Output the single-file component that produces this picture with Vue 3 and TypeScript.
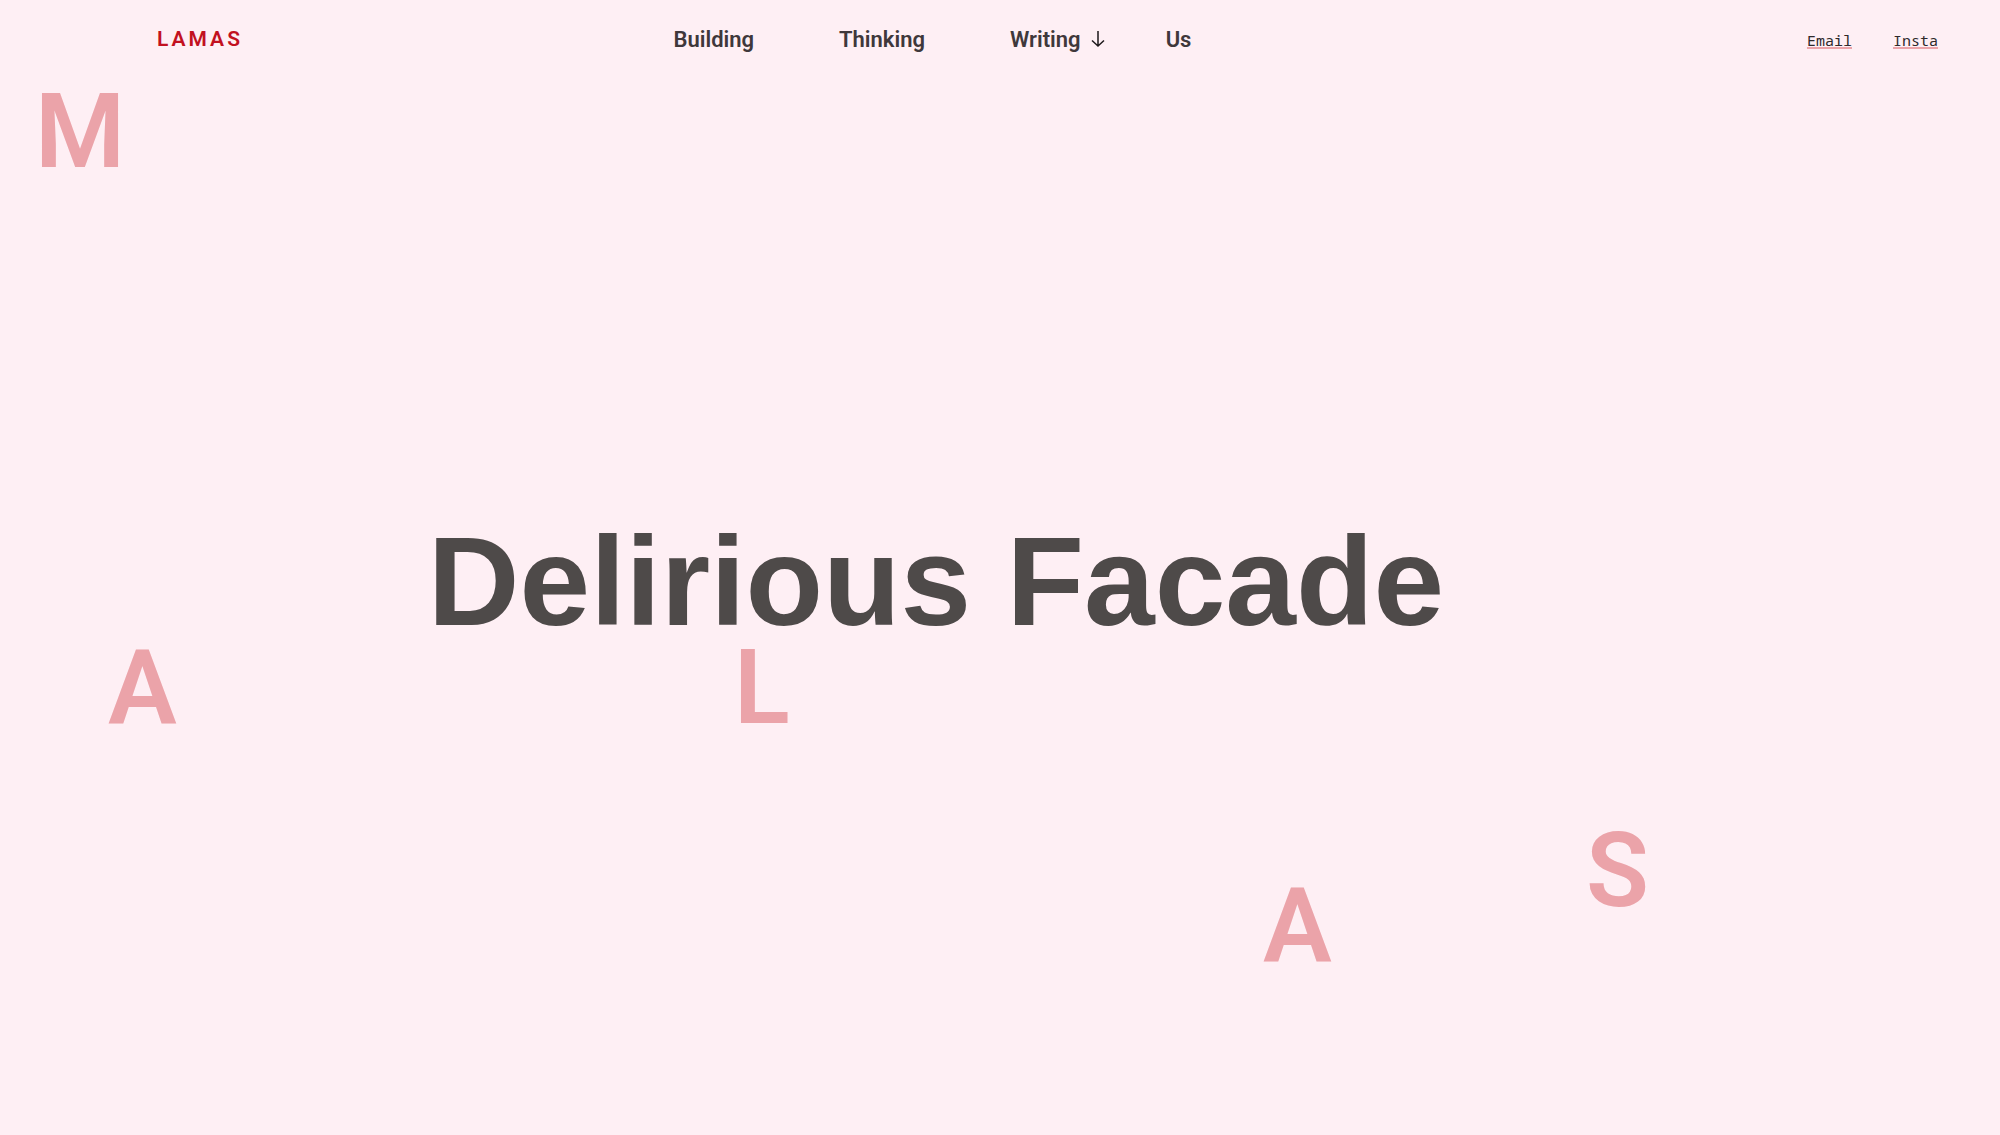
<script setup lang="ts">
interface NavItem {
  label: string
  href: string
  hasMenu?: boolean
}

interface Letter {
  char: string
  x: number
  y: number
}

const navItems: NavItem[] = [
  { label: 'Building', href: '#building' },
  { label: 'Thinking', href: '#thinking' },
  { label: 'Writing', href: '#writing', hasMenu: true },
  { label: 'Us', href: '#us' },
]

const contacts: NavItem[] = [
  { label: 'Email', href: '#email' },
  { label: 'Insta', href: '#insta' },
]

// Positions on the free canvas, in percent of the window.
const letters: Letter[] = [
  { char: 'M', x: 1.75, y: 7.2 },
  { char: 'A', x: 5.4, y: 56.2 },
  { char: 'L', x: 36.7, y: 56.2 },
  { char: 'A', x: 63.15, y: 77.2 },
  { char: 'S', x: 79.3, y: 72.3 },
]
</script>

<template>
  <div class="page">
    <header class="header">
      <a class="logo" href="#home">LAMAS</a>
      <nav class="nav" aria-label="Main">
        <a v-for="item in navItems" :key="item.label" class="nav-link" :class="{ 'has-menu': item.hasMenu }" :href="item.href">
          {{ item.label }}
          <svg v-if="item.hasMenu" class="arrow" viewBox="0 0 14 18" aria-hidden="true">
            <path d="M7 1V16M1 10.5L7 16L13 10.5" />
          </svg>
        </a>
      </nav>
      <div class="contacts">
        <a v-for="c in contacts" :key="c.label" class="contact" :href="c.href">{{ c.label }}</a>
      </div>
    </header>

    <main class="main">
      <h1 class="title">Delirious Facade</h1>
    </main>

    <div class="letters" aria-hidden="true">
      <span
        v-for="(l, i) in letters"
        :key="i"
        class="letter"
        :style="{ left: l.x + '%', top: l.y + '%' }"
      >{{ l.char }}</span>
    </div>
  </div>
</template>

<style>
body {
  margin: 0;
  background: #feeff4;
}
</style>

<style scoped>
.page {
  position: relative;
  display: flex;
  flex-direction: column;
  min-height: 100vh;
  overflow: hidden;
  background: #feeff4;
  color: #4e4a49;
  font-family: Roboto, "Liberation Sans", sans-serif;
}

.header {
  display: grid;
  grid-template-columns: 29% auto 1fr;
  align-items: center;
  height: 78px;
  padding: 0 62px 0 157px;
}

.logo {
  color: #c2111f;
  font-size: 21px;
  font-weight: 600;
  letter-spacing: 3px;
  text-decoration: none;
}

.nav {
  display: flex;
  align-items: center;
  gap: 85px;
}

.nav-link {
  display: flex;
  align-items: center;
  gap: 10px;
  color: #3f383b;
  font-size: 22px;
  font-weight: 600;
  text-decoration: none;
}

.has-menu {
  margin-right: -24px;
}

.arrow {
  width: 14px;
  height: 18px;
  fill: none;
  stroke: #1d181a;
  stroke-width: 1.5;
}

.contacts {
  display: flex;
  justify-content: flex-end;
  gap: 41px;
  padding-top: 2px;
}

.contact {
  color: #2e292b;
  font-family: "Noto Sans Mono", "DejaVu Sans Mono", "Liberation Mono", monospace;
  font-size: 15px;
  text-decoration: underline;
  text-decoration-color: #eba3a9;
  text-decoration-skip-ink: none;
  text-decoration-thickness: 2px;
  text-underline-offset: 1px;
}

.main {
  display: flex;
  flex: 1;
  align-items: center;
  justify-content: center;
  padding: 0 128px 52px 0;
}

.title {
  margin: 0;
  font-family: "Liberation Sans", Arial, sans-serif;
  font-size: 127px;
  font-weight: 700;
  line-height: 146px;
  white-space: nowrap;
}

.letters {
  position: absolute;
  inset: 0;
  pointer-events: none;
}

.letter {
  position: absolute;
  color: #eba3a9;
  font-size: 103px;
  font-weight: 600;
  line-height: 100px;
}
</style>
